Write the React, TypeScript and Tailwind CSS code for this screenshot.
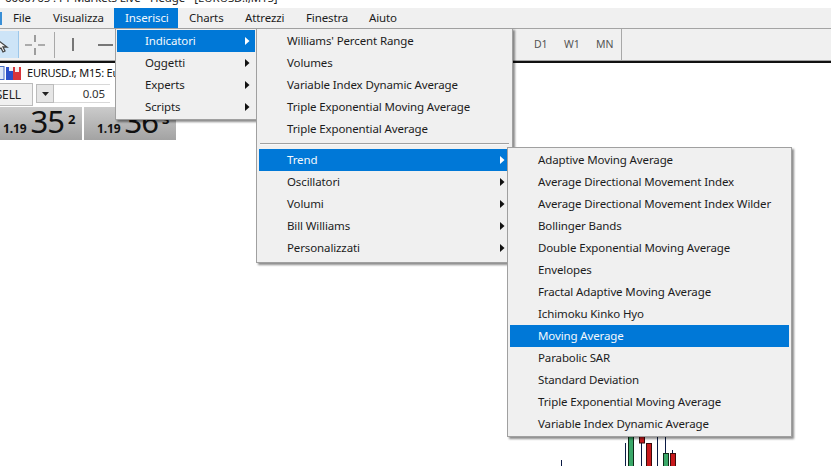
import * as React from 'react'

const menuBar = [
  { label: 'File', width: 'w-[40px]' },
  { label: 'Visualizza', width: 'w-[72px]' },
  { label: 'Inserisci', width: 'w-[64px]', active: true },
  { label: 'Charts', width: 'w-[56px]' },
  { label: 'Attrezzi', width: 'w-[61px]' },
  { label: 'Finestra', width: 'w-[63px]' },
  { label: 'Aiuto', width: 'w-[50px]' },
]

interface Row {
  label: string
  sub?: boolean
  active?: boolean
}

const insertMenu: Row[] = [
  { label: 'Indicatori', sub: true, active: true },
  { label: 'Oggetti', sub: true },
  { label: 'Experts', sub: true },
  { label: 'Scripts', sub: true },
]

const indicatorsTop: Row[] = [
  { label: "Williams' Percent Range" },
  { label: 'Volumes' },
  { label: 'Variable Index Dynamic Average' },
  { label: 'Triple Exponential Moving Average' },
  { label: 'Triple Exponential Average' },
]

const indicatorsBottom: Row[] = [
  { label: 'Trend', sub: true, active: true },
  { label: 'Oscillatori', sub: true },
  { label: 'Volumi', sub: true },
  { label: 'Bill Williams', sub: true },
  { label: 'Personalizzati', sub: true },
]

const trendMenu: Row[] = [
  { label: 'Adaptive Moving Average' },
  { label: 'Average Directional Movement Index' },
  { label: 'Average Directional Movement Index Wilder' },
  { label: 'Bollinger Bands' },
  { label: 'Double Exponential Moving Average' },
  { label: 'Envelopes' },
  { label: 'Fractal Adaptive Moving Average' },
  { label: 'Ichimoku Kinko Hyo' },
  { label: 'Moving Average', active: true },
  { label: 'Parabolic SAR' },
  { label: 'Standard Deviation' },
  { label: 'Triple Exponential Moving Average' },
  { label: 'Variable Index Dynamic Average' },
]

function MenuRow({ row }: { row: Row }) {
  return (
    <div
      className={`flex h-[22px] items-center justify-between pl-[28px] pr-[5px] ${
        row.active ? 'bg-[#0078d7] text-[#f4f9fd]' : 'text-[#1c1c1c]'
      }`}
    >
      <span>{row.label}</span>
      {row.sub && (
        <svg width="5" height="8" viewBox="0 0 5 8" className={row.active ? 'fill-white' : 'fill-[#111]'}>
          <polygon points="0,0 4.5,4 0,8" />
        </svg>
      )}
    </div>
  )
}

function FlagIcon() {
  return (
    <svg width="22" height="15" viewBox="0 0 22 15" className="shrink-0">
      <rect x="-3" y="0.5" width="7" height="13" fill="#dfe8f7" stroke="#4a6fc4" />
      <rect x="6" y="1" width="7" height="13" fill="#2b50c8" />
      <rect x="13" y="1" width="8" height="13" fill="#d8343a" />
      <rect x="9" y="1" width="4" height="4" fill="#f2f2f2" />
      <rect x="15" y="1" width="4" height="5" fill="#f2f2f2" />
    </svg>
  )
}

function PriceBox({ small, big, sup, width, inset }: { small: string; big: string; sup: string; width: string; inset: string }) {
  return (
    <div className={`flex h-[33px] ${width} items-end bg-gradient-to-b from-[#cbcbcb] to-[#a3a3a3] text-[#111]`}>
      <span className={`mb-[5px] ${inset} text-[12px] font-bold leading-none`}>{small}</span>
      <span className="mb-[1px] ml-[4px] text-[31px] leading-[36px] tracking-[-1px]">{big}</span>
      <span className="mb-[14px] ml-[4px] text-[13px] font-bold leading-none">{sup}</span>
    </div>
  )
}

export default function App() {
  return (
    <div className="relative flex h-[466px] w-[831px] flex-col overflow-hidden bg-white text-[11.5px] tracking-[-0.12px] font-['Noto_Sans','Open_Sans',sans-serif]">
      {/* Title bar, cut by the top of the picture */}
      <div className="h-[8px] overflow-hidden bg-white pl-[5px]">
        <div className="mt-[-10px] leading-[16px] text-[#222]">
          6000765 : FT Markets Live - Hedge - [EURUSD.r,M15]
        </div>
      </div>

      {/* Menu bar */}
      <div className="flex h-[20px] bg-[#f0f0f0]">
        <div className="mt-[4px] h-[13px] w-[2px] bg-[#3a8fd6]" />
        {menuBar.map((item) => (
          <div
            key={item.label}
            className={`flex ${item.width} items-center pl-[11px] ${
              item.active ? 'bg-[#0078d7] text-[#f4f9fd]' : 'text-[#1c1c1c]'
            }`}
          >
            {item.label}
          </div>
        ))}
      </div>

      {/* Toolbar */}
      <div className="flex h-[33px] items-center border-y border-[#a4a4a4] bg-[#f0f0f0]">
        <div className="flex h-[27px] w-[19px] items-center justify-end overflow-hidden border-r border-[#9cc7ea] bg-[#cde4f7] pr-[8px]">
          <svg width="12" height="16" viewBox="0 0 12 16" fill="#f4f4f4" stroke="#444" strokeWidth="1.3" className="shrink-0">
            <path d="M-3 1 L9 10 L5 10 L7 14 L5 15 L3 11 L-1 13 Z" />
          </svg>
        </div>
        <svg width="20" height="20" viewBox="0 0 20 20" stroke="#666" strokeWidth="1.2" className="ml-[6px]">
          <path d="M0 10h7M13 10h7M10 0v7M10 13v7" />
        </svg>
        <div className="ml-[9px] h-[26px] w-px bg-[#a8a8a8]" />
        <div className="ml-[17px] h-[13px] w-[2px] bg-[#777]" />
        <div className="ml-[24px] h-[2px] w-[15px] bg-[#777]" />
        <div className="ml-[421px] flex h-full items-center text-[10.5px] text-[#555]">
          <span className="w-[30px]">D1</span>
          <span className="w-[32px]">W1</span>
          <span className="w-[25px]">MN</span>
        </div>
        <div className="h-full w-px bg-[#a8a8a8]" />
      </div>

      {/* Chart window */}
      <div className="relative flex-1 border-t-2 border-[#111] bg-white">
        <svg width="831" height="405" viewBox="0 63 831 405" className="absolute left-0 top-0">
          <g stroke="#0a1a44" strokeWidth="1">
            <path d="M561.5 460v6M625.5 443v23M641.5 430v36M657.5 430v36M665.5 430v24M672.5 450v4" />
          </g>
          <rect x="628.5" y="430" width="5" height="37" fill="#3aa868" stroke="#0f2a18" />
          <rect x="639.5" y="430" width="5" height="13" fill="#c8191c" stroke="#3a0c0c" />
          <rect x="646.5" y="443.5" width="5" height="23" fill="#c8191c" stroke="#3a0c0c" />
          <rect x="663.5" y="453.5" width="5" height="13" fill="#3aa868" stroke="#0f2a18" />
          <rect x="670.5" y="453.5" width="5" height="13" fill="#c8191c" stroke="#3a0c0c" />
        </svg>

        {/* One click trading panel */}
        <div className="absolute left-0 top-0 w-[180px]">
          <div className="flex h-[20px] w-[115px] items-center overflow-hidden text-[11px] tracking-[-0.2px] text-[#111]">
            <FlagIcon />
            <span className="ml-[5px] whitespace-nowrap">EURUSD.r, M15: Eu</span>
          </div>
          <div className="flex h-[24px] items-start">
            <div className="flex h-[23px] w-[33px] items-center justify-end overflow-hidden border border-l-0 border-[#bcbcbc] bg-[#f0f0f0] pr-[11px] text-[12px] text-[#222]">
              <span className="shrink-0">SELL</span>
            </div>
            <div className="ml-[3px] mt-px flex h-[19px] w-[18px] items-center justify-center border border-[#bcbcbc] bg-[#e6e6e6]">
              <svg width="7" height="4" viewBox="0 0 7 4" className="fill-[#222]">
                <polygon points="0,0 7,0 3.5,4" />
              </svg>
            </div>
            <div className="mt-px flex h-[19px] w-[56px] items-center justify-end border-y border-[#d8d8d8] pr-[5px] text-[#333]">
              0.05
            </div>
          </div>
          <div className="flex gap-[2px]">
            <PriceBox small="1.19" big="35" sup="2" width="w-[82px]" inset="ml-[3px]" />
            <PriceBox small="1.19" big="36" sup="3" width="w-[92px]" inset="ml-[13px]" />
          </div>
        </div>
      </div>

      {/* Inserisci menu */}
      <div className="absolute left-[115px] top-[28px] w-[142px] border border-[#a0a0a0] bg-[#f0f0f0] p-px shadow-[2px_2px_2px_rgba(0,0,0,0.45)]">
        {insertMenu.map((row) => (
          <MenuRow key={row.label} row={row} />
        ))}
      </div>

      {/* Indicatori submenu */}
      <div className="absolute left-[256px] top-[28px] w-[257px] border border-[#a0a0a0] bg-[#f0f0f0] px-[2px] py-px shadow-[2px_2px_2px_rgba(0,0,0,0.45)]">
        {indicatorsTop.map((row) => (
          <MenuRow key={row.label} row={row} />
        ))}
        <div className="mx-px mb-[4px] mt-[3px] h-[2px] border-t border-[#a0a0a0] bg-[#f8f8f8]" />
        {indicatorsBottom.map((row) => (
          <MenuRow key={row.label} row={row} />
        ))}
        <div className="h-[2px]" />
      </div>

      {/* Trend submenu */}
      <div className="absolute left-[507px] top-[147px] w-[285px] border border-[#a0a0a0] bg-[#f0f0f0] px-[2px] py-px shadow-[2px_2px_2px_rgba(0,0,0,0.45)]">
        {trendMenu.map((row) => (
          <MenuRow key={row.label} row={row} />
        ))}
      </div>
    </div>
  )
}
